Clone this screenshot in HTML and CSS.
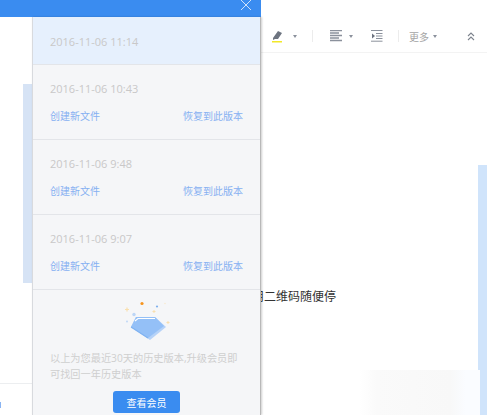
FILE: index.html
```html
<!DOCTYPE html>
<html lang="zh-CN">
<head>
    <meta charset="UTF-8">
    <meta name="viewport" content="width=device-width, initial-scale=1.0">
    <title>历史版本</title>
    <link rel="stylesheet" href="styles.css">
</head>
<body>
    <div class="app">
        <div class="panel-header">
            <svg class="close-icon" width="12" height="12" viewBox="0 0 12 12">
                <path d="M1 1 L11 11 M11 1 L1 11" stroke="#cfe2fb" stroke-width="1" fill="none"/>
            </svg>
        </div>

        <div class="left-side">
            <div class="left-strip"></div>
            <div class="left-line"></div>
            <div class="left-mark"></div>
        </div>

        <div class="panel">
            <div class="version active">
                <div class="version-date">2016-11-06 11:14</div>
            </div>
            <div class="version">
                <div class="version-date">2016-11-06 10:43</div>
                <div class="version-links"><span>创建新文件</span><span>恢复到此版本</span></div>
            </div>
            <div class="version">
                <div class="version-date">2016-11-06 9:48</div>
                <div class="version-links"><span>创建新文件</span><span>恢复到此版本</span></div>
            </div>
            <div class="version">
                <div class="version-date">2016-11-06 9:07</div>
                <div class="version-links"><span>创建新文件</span><span>恢复到此版本</span></div>
            </div>
            <div class="upgrade">
                <svg class="gem" width="50" height="42" viewBox="0 0 50 42">
                    <circle cx="18" cy="2.5" r="1.6" fill="#f7941d"/>
                    <circle cx="33" cy="5.5" r="1.1" fill="#7fb0ee"/>
                    <circle cx="41" cy="2.5" r="0.7" fill="#f8e8c8"/>
                    <circle cx="10" cy="13.5" r="1.7" fill="#bcd5f6"/>
                    <circle cx="3" cy="20.5" r="0.9" fill="#bcd5f6"/>
                    <path d="M1 8.5 H5 M3 6.5 V10.5" stroke="#f9dfae" stroke-width="1.2"/>
                    <path d="M28.5 10.5 H31.5 M30 9 V12" stroke="#f9dfae" stroke-width="1"/>
                    <path d="M42.5 21.5 H45.5 M44 20 V23" stroke="#f9dfae" stroke-width="1"/>
                    <path d="M12 16 H31 L42 26 L26 39 L7 26 Z" fill="#b5d2f8"/>
                    <path d="M12 16 H31 L40 25 L24 37 L7 26 Z" fill="#94c0f7"/>
                    <path d="M7 26 L24 37" stroke="#7fb2f1" stroke-width="1.2" fill="none"/>
                    <path d="M11 20 L14 17.5 H31" stroke="#ffffff" stroke-width="1.2" fill="none"/>
                </svg>
                <p class="upgrade-text">以上为您最近30天的历史版本,升级会员即可找回一年历史版本</p>
                <button class="upgrade-btn">查看会员</button>
            </div>
        </div>

        <div class="editor">
            <div class="toolbar">
                <svg class="tool-icon" width="13" height="14" viewBox="0 0 13 14">
                    <path d="M2 9 L7 2 L11 4 L7 10 L4 10 L2 11 Z" fill="#6d7480"/>
                    <rect x="1" y="12" width="10" height="1.5" fill="#f2e829"/>
                </svg>
                <span class="caret first-caret"></span>
                <span class="divider"></span>
                <svg class="tool-icon" width="12" height="12" viewBox="0 0 12 12">
                    <path d="M0 0.5 H12 M0 3 H9 M0 5.5 H12 M0 8 H9 M0 10.5 H12" stroke="#8b919c" stroke-width="1.3"/>
                </svg>
                <span class="caret align-caret"></span>
                <svg class="tool-icon indent" width="12" height="12" viewBox="0 0 12 12">
                    <path d="M0 0.5 H11.5 M5 3.5 H11.5 M5 6 H11.5 M5 8.5 H11.5 M0 11.2 H11.5" stroke="#8b919c" stroke-width="1"/>
                    <path d="M1 3.5 L4 6 L1 8.5 Z" fill="#6d7480"/>
                </svg>
                <span class="divider"></span>
                <span class="more">更多</span>
                <span class="caret more-caret"></span>
                <svg class="collapse" width="8" height="9" viewBox="0 0 8 9">
                    <path d="M1 4 L4 1 L7 4 M1 8 L4 5 L7 8" stroke="#7d838d" stroke-width="1.1" fill="none"/>
                </svg>
            </div>
            <div class="editor-body">
                <p class="doc-text">用二维码随便停</p>
                <div class="scrollbar"></div>
                <div class="mosaic"></div>
            </div>
        </div>
    </div>
</body>
</html>
```

FILE: styles.css
```css
* {
    margin: 0;
    padding: 0;
    box-sizing: border-box;
}

body {
    font-family: "Open Sans", "Noto Sans CJK SC", sans-serif;
    background: white;
    overflow: hidden;
}

.app {
    display: grid;
    grid-template-columns: 32px 229px 226px;
    grid-template-rows: 17px 398px;
    width: 487px;
    height: 415px;
    overflow: hidden;
}

.panel-header {
    grid-column: 1 / 3;
    grid-row: 1;
    background: #3a8cf0;
    display: flex;
    justify-content: flex-end;
    align-items: flex-start;
    padding-right: 9px;
    position: relative;
    z-index: 1;
}

.close-icon {
    margin-top: -1px;
}

.left-side {
    grid-column: 1;
    grid-row: 2;
    padding-top: 67px;
}

.left-strip {
    width: 9px;
    height: 199px;
    margin-left: 23px;
    background: #d6e3f5;
}

.left-line {
    height: 1px;
    margin-top: 100px;
    background: #eceef0;
}

.left-mark {
    width: 1px;
    height: 6px;
    margin-top: 18px;
    background: #8ab4f2;
}

.panel {
    grid-column: 2;
    grid-row: 2;
    background: #f5f6f8;
    border-left: 1px solid #d8dade;
    border-right: 1px solid #b8b8b8;
    box-shadow: 1px 0 2px rgba(0, 0, 0, 0.2);
    display: flex;
    flex-direction: column;
    position: relative;
    z-index: 1;
}

.version {
    height: 75px;
    padding: 16px 17px 0 17px;
    border-bottom: 1px solid #e3e5e9;
}

.version.active {
    height: 48px;
    padding-top: 17px;
    background: #e6f0fd;
}

.version-date {
    font-size: 11px;
    line-height: 15px;
    color: #c9c8c8;
}

.version-links {
    display: flex;
    justify-content: space-between;
    margin-top: 13px;
    font-size: 10px;
    line-height: 14px;
    color: #86b0f2;
}

.upgrade {
    display: flex;
    flex-direction: column;
    padding: 11px 16px 0 17px;
}

.gem {
    margin-left: 74px;
    overflow: visible;
}

.upgrade-text {
    margin-top: 7px;
    font-size: 10.2px;
    line-height: 16px;
    color: #cfcfcf;
}

.upgrade-btn {
    align-self: center;
    width: 67px;
    height: 22px;
    margin-top: 9px;
    margin-right: 1px;
    border: none;
    border-radius: 3px;
    background: #3a8cf0;
    color: white;
    font-family: inherit;
    font-size: 10px;
}

.editor {
    grid-column: 3;
    grid-row: 1 / 3;
    display: flex;
    flex-direction: column;
}

.toolbar {
    height: 53px;
    border-bottom: 1px solid #f3f3f3;
    display: flex;
    align-items: center;
    padding: 20px 0 0 10px;
}

.caret {
    width: 0;
    height: 0;
    border-left: 2.5px solid transparent;
    border-right: 2.5px solid transparent;
    border-top: 3px solid #8b919c;
}

.first-caret {
    margin-left: 9px;
}

.align-caret {
    margin-left: 7px;
}

.more-caret {
    margin-left: 4px;
}

.divider {
    width: 1px;
    height: 12px;
    margin: 0 17px 0 15px;
    background: #ececec;
}

.indent {
    margin-left: 18px;
}

.more {
    margin-left: -7px;
    font-size: 10px;
    color: #a5a5a5;
}

.collapse {
    margin-left: 30px;
}

.editor-body {
    flex: 1;
    display: flex;
    justify-content: space-between;
    align-items: flex-start;
    position: relative;
}

.doc-text {
    margin: 237px 0 0 -9px;
    font-size: 12px;
    line-height: 14px;
    color: #333;
    white-space: nowrap;
}

.scrollbar {
    width: 9px;
    height: 250px;
    margin-top: 112px;
    background: #d0e4fb;
}

/* faint blurred patch over the bottom right corner */
.mosaic {
    position: absolute;
    right: 7px;
    bottom: 0;
    width: 120px;
    height: 45px;
    background: linear-gradient(90deg, #ffffff 0%, #fafafa 14%, #f8f8f8 75%, #fafcff 88%);
}
```
